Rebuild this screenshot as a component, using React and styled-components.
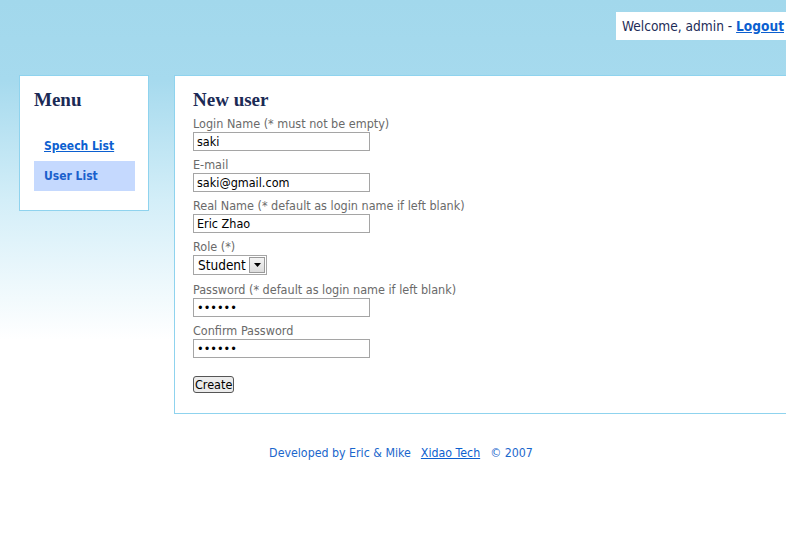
import React from "react";
import styled, { createGlobalStyle } from "styled-components";

const Global = createGlobalStyle`
  html, body { margin: 0; padding: 0; background: #fff; }
  body { overflow: hidden; font-family: "DejaVu Sans Condensed", "DejaVu Sans", sans-serif; }
`;

const Page = styled.div`
  min-height: 557px;
  background: linear-gradient(#a2d8ec 0px, #a6daee 80px, #d3eef8 200px, #fff 340px);
`;

const Header = styled.div`
  display: flex;
  justify-content: flex-end;
  padding-top: 12px;
`;

const WelcomeBox = styled.div`
  background: #fff;
  height: 28px;
  line-height: 28px;
  padding: 0 2px 0 6px;
  font-size: 13.6px;
  color: #1c2b57;
`;

const StrongLink = styled.a`
  color: #0b5fd0;
  font-weight: bold;
  text-decoration: underline;
`;

const Layout = styled.div`
  display: flex;
  align-items: flex-start;
  gap: 25px;
  padding: 35px 0 0 19px;
`;

const Panel = styled.div`
  flex-shrink: 0;
  background: #fff;
  border: 1px solid #8fd3ee;
  box-sizing: border-box;
`;

const MenuPanel = styled(Panel)`
  width: 130px;
  padding: 12px 13px 19px 14px;
`;

const MainPanel = styled(Panel)`
  width: 640px;
  border-right: none;
  padding: 12px 18px 20px 18px;
`;

const Heading = styled.h2`
  margin: 0;
  font-family: "Liberation Serif", "Times New Roman", serif;
  font-size: 19px;
  font-weight: bold;
  line-height: 24px;
  color: #1b2a55;
`;

const MenuList = styled.ul`
  list-style: none;
  margin: 19px 0 0;
  padding: 0;
`;

const MenuItem = styled.li`
  height: 30px;
  line-height: 31px;
  padding-left: 10px;
  font-size: 12px;
  font-weight: bold;
  white-space: nowrap;
  background: ${(p) => (p.$active ? "#c5d9fe" : "transparent")};
`;

const MenuLink = styled.a`
  color: ${(p) => (p.$active ? "#1a5fcc" : "#0b5fd0")};
  text-decoration: ${(p) => (p.$active ? "none" : "underline")};
`;

const Form = styled.form`
  display: flex;
  flex-direction: column;
  align-items: flex-start;
  margin-top: 2px;
`;

const Field = styled.div`
  display: flex;
  flex-direction: column;
  align-items: flex-start;
  margin-bottom: ${(p) => p.$gap || 4}px;
`;

const Label = styled.label`
  font-size: 12.5px;
  line-height: 15px;
  padding-top: 2px;
  color: #6a6a6a;
  margin-bottom: 1px;
`;

const TextInput = styled.input`
  box-sizing: border-box;
  width: 177px;
  height: 19px;
  margin: 0;
  padding: 0 3px;
  border: 1px solid #a5a5a5;
  font-family: "DejaVu Sans Condensed", "DejaVu Sans", sans-serif;
  font-size: 12.5px;
  color: #000;
  background: #fff;
  outline: none;
`;

const SelectWrap = styled.div`
  position: relative;
  width: 74px;
  height: 20px;
`;

const Select = styled.select`
  appearance: none;
  box-sizing: border-box;
  width: 74px;
  height: 20px;
  margin: 0;
  padding: 0 0 0 4px;
  border: 1px solid #a5a5a5;
  border-radius: 0;
  background: #fff;
  font-family: "DejaVu Sans Condensed", "DejaVu Sans", sans-serif;
  font-size: 13.5px;
  color: #000;
  outline: none;
`;

const SelectArrow = styled.span`
  position: absolute;
  top: 2px;
  right: 2px;
  width: 16px;
  height: 16px;
  box-sizing: border-box;
  border: 1px solid #9a9a9a;
  background: linear-gradient(#f4f4f4, #dcdcdc);
  display: flex;
  align-items: center;
  justify-content: center;
  pointer-events: none;
`;

const Button = styled.button`
  margin-top: 14px;
  height: 17px;
  padding: 0 1px;
  border: 1px solid #555;
  border-radius: 3px;
  background: #ececec;
  font-family: "DejaVu Sans Condensed", "DejaVu Sans", sans-serif;
  font-size: 12.5px;
  line-height: 15px;
  color: #000;
`;

const Footer = styled.div`
  margin-top: 31px;
  padding-left: 16px;
  text-align: center;
  font-size: 12.3px;
  line-height: 16px;
  color: #1a66cc;
`;

const FooterLink = styled.a`
  color: #0b5fd0;
  text-decoration: underline;
  margin: 0 10px;
`;

const fields = [
  { label: "Login Name (* must not be empty)", value: "saki" },
  { label: "E-mail", value: "saki@gmail.com" },
  { label: "Real Name (* default as login name if left blank)", value: "Eric Zhao" },
];
const pwFields = [
  { label: "Password (* default as login name if left blank)", value: "saki12" },
  { label: "Confirm Password", value: "saki12" },
];

export default function App() {
  return (
    <>
      <Global />
      <Page>
        <Header>
          <WelcomeBox>
            Welcome, admin - <StrongLink href="#">Logout</StrongLink>
          </WelcomeBox>
        </Header>
        <Layout>
          <MenuPanel>
            <Heading>Menu</Heading>
            <MenuList>
              <MenuItem>
                <MenuLink href="#">Speech List</MenuLink>
              </MenuItem>
              <MenuItem $active>
                <MenuLink $active href="#">User List</MenuLink>
              </MenuItem>
            </MenuList>
          </MenuPanel>
          <MainPanel>
            <Heading>New user</Heading>
            <Form onSubmit={(e) => e.preventDefault()}>
              {fields.map((f) => (
                <Field key={f.label}>
                  <Label>{f.label}</Label>
                  <TextInput type="text" defaultValue={f.value} />
                </Field>
              ))}
              <Field $gap={5}>
                <Label>Role (*)</Label>
                <SelectWrap>
                  <Select defaultValue="Student">
                    <option>Student</option>
                    <option>Teacher</option>
                    <option>Admin</option>
                  </Select>
                  <SelectArrow>
                    <svg width="7" height="4" viewBox="0 0 7 4">
                      <path d="M0 0h7L3.5 4z" fill="#000" />
                    </svg>
                  </SelectArrow>
                </SelectWrap>
              </Field>
              {pwFields.map((f) => (
                <Field key={f.label}>
                  <Label>{f.label}</Label>
                  <TextInput type="password" defaultValue={f.value} />
                </Field>
              ))}
              <Button type="submit">Create</Button>
            </Form>
          </MainPanel>
        </Layout>
        <Footer>
          Developed by Eric &amp; Mike<FooterLink href="#">Xidao Tech</FooterLink>© 2007
        </Footer>
      </Page>
    </>
  );
}
